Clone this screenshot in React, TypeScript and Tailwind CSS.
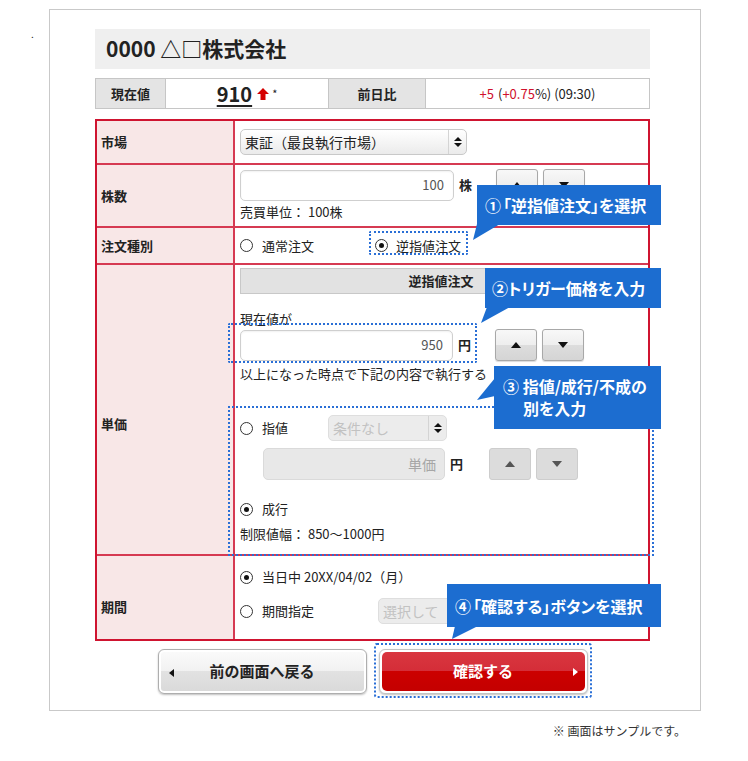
import React from 'react';

type Dir = 'up' | 'down' | 'left' | 'right';

const Tri = ({ dir, color = '#111' }: { dir: Dir; color?: string }) => {
  if (dir === 'up')
    return (
      <svg width="10" height="6" viewBox="0 0 10 6">
        <polygon points="0,6 5,0 10,6" fill={color} />
      </svg>
    );
  if (dir === 'down')
    return (
      <svg width="10" height="6" viewBox="0 0 10 6">
        <polygon points="0,0 10,0 5,6" fill={color} />
      </svg>
    );
  if (dir === 'left')
    return (
      <svg width="5" height="8" viewBox="0 0 5 8">
        <polygon points="5,0 5,8 0,4" fill={color} />
      </svg>
    );
  return (
    <svg width="5" height="8" viewBox="0 0 5 8">
      <polygon points="0,0 0,8 5,4" fill={color} />
    </svg>
  );
};

const SelectArrows = () => (
  <svg width="8" height="12" viewBox="0 0 8 12">
    <polygon points="0,5 4,1 8,5" fill="#111" />
    <polygon points="0,7 8,7 4,11" fill="#111" />
  </svg>
);

const Radio = ({ checked }: { checked?: boolean }) => (
  <span className="flex h-[13px] w-[13px] shrink-0 items-center justify-center rounded-full border-[1.5px] border-[#333] bg-white">
    {checked && <span className="h-[5px] w-[5px] rounded-full bg-[#111]" />}
  </span>
);

const Select = ({ text, width, disabled }: { text: string; width: string; disabled?: boolean }) => (
  <div
    className={
      disabled
        ? `flex h-[26px] ${width} items-stretch overflow-hidden rounded-[5px] border border-[#dedede] bg-[#ececec] text-[#c2c2c2]`
        : `flex h-[26px] ${width} items-stretch overflow-hidden rounded-[5px] border border-[#c9c9c9] bg-gradient-to-b from-white to-[#ebebeb] text-[#222]`
    }
  >
    <span className="flex flex-1 items-center whitespace-nowrap pl-[4px] text-[14px]">{text}</span>
    <span className="flex w-[18px] items-center justify-center border-l border-[#d4d4d4]">
      <SelectArrows />
    </span>
  </div>
);

const SpinButtons = ({ disabled }: { disabled?: boolean }) => (
  <div className="flex gap-[5px]">
    {(['up', 'down'] as const).map((d) => (
      <button
        key={d}
        className={
          disabled
            ? 'flex h-[32px] w-[42px] items-center justify-center rounded-[3px] border border-[#cdcdcd] bg-[#dcdcdc]'
            : 'flex h-[32px] w-[42px] items-center justify-center rounded-[3px] border border-[#a8a8a8] bg-[linear-gradient(#f8f8f8_0%,#eeeeee_50%,#dddddd_50%,#d5d5d5_100%)] shadow-[0_1px_1px_rgba(0,0,0,0.15)]'
        }
      >
        <Tri dir={d} color={disabled ? '#555' : '#111'} />
      </button>
    ))}
  </div>
);

const Label = ({ children, className }: { children: React.ReactNode; className: string }) => (
  <div className={`w-[138px] shrink-0 border-r-2 border-[#d63a52] bg-[#f8e7e7] pl-[4px] text-[13px] font-bold ${className}`}>
    {children}
  </div>
);

const callout =
  "absolute bg-[#1c6dd0] text-[16px] font-bold leading-[22px] text-white [font-feature-settings:'palt']";

export default function App() {
  return (
    <div className="relative h-[761px] w-[748px] bg-white pl-[49px] pt-[9px] font-['Noto_Sans_CJK_JP',sans-serif] text-[#222]">
      <span className="absolute left-[31px] top-[26px] text-[10px]">.</span>

      <div className="h-[702px] w-[652px] border border-[#c9c9c9] pl-[45px] pt-[19px]">
        {/* 銘柄名 */}
        <div className="flex h-[40px] w-[555px] items-center bg-[#efefef] pl-[11px] text-[21px] font-bold">
          0000 △□株式会社
        </div>

        {/* 株価 */}
        <div className="mt-[9px] flex h-[31px] w-[555px] border border-[#c6c6c6] text-[13px]">
          <div className="flex w-[69px] items-center justify-center bg-[#e4e4e4] font-bold">現在値</div>
          <div className="flex w-[163px] items-center justify-center border-l border-[#c6c6c6]">
            <span className="text-[20px] font-bold leading-none underline decoration-[1.5px] underline-offset-[3px]">910</span>
            <svg className="ml-[5px]" width="12" height="12" viewBox="0 0 12 12">
              <polygon points="6,0 12,6 8.5,6 8.5,12 3.5,12 3.5,6 0,6" fill="#d40000" />
            </svg>
            <span className="ml-[3px] text-[11px] leading-none">*</span>
          </div>
          <div className="flex w-[97px] items-center justify-center border-l border-[#c6c6c6] bg-[#e4e4e4] font-bold">前日比</div>
          <div className="flex flex-1 items-center justify-center border-l border-[#c6c6c6]">
            <span className="text-[#d0102c]">+5</span>
            <span className="ml-[4px]">(</span>
            <span className="text-[#d0102c]">+0.75</span>
            <span>%) (09:30)</span>
          </div>
        </div>

        {/* 注文フォーム */}
        <div className="mt-[10px] w-[555px] border-2 border-[#cf1430] text-[13px]">
          <div className="flex h-[42px]">
            <Label className="flex items-center">市場</Label>
            <div className="flex flex-1 items-center pl-[5px]">
              <Select text="東証（最良執行市場）" width="w-[227px]" />
            </div>
          </div>

          <div className="flex h-[63px] border-t-2 border-[#d63a52]">
            <Label className="flex items-center">株数</Label>
            <div className="flex-1 pl-[5px] pt-[4px]">
              <div className="flex items-center">
                <div className="flex h-[31px] w-[214px] items-center justify-end rounded-[5px] border border-[#cfcfcf] pr-[9px] text-[#555] shadow-[inset_0_1px_2px_rgba(0,0,0,0.06)]">
                  100
                </div>
                <span className="ml-[5px] font-bold">株</span>
                <div className="ml-[24px]">
                  <SpinButtons />
                </div>
              </div>
              <div className="mt-[2px] leading-[18px]">売買単位： 100株</div>
            </div>
          </div>

          <div className="flex h-[37px] border-t-2 border-[#d63a52]">
            <Label className="flex items-center">注文種別</Label>
            <div className="flex flex-1 items-center pl-[5px]">
              <div className="flex w-[135px] items-center gap-[9px]">
                <Radio />
                <span>通常注文</span>
              </div>
              <div className="flex items-center gap-[8px]">
                <Radio checked />
                <span>逆指値注文</span>
              </div>
            </div>
          </div>

          <div className="flex h-[291px] border-t-2 border-[#d63a52]">
            <Label className="pt-[149px]">単価</Label>
            <div className="flex-1 pl-[5px] pr-[6px] pt-[3px]">
              <div className="flex h-[26px] items-center justify-center border border-[#c8c8c8] bg-[#e2e2e2] font-bold">
                逆指値注文
              </div>
              <div className="mt-[16px] leading-[18px]">現在値が</div>
              <div className="mt-[1px] flex items-center">
                <div className="flex h-[31px] w-[213px] items-center justify-end rounded-[5px] border border-[#cfcfcf] pr-[9px] text-[#555] shadow-[inset_0_1px_2px_rgba(0,0,0,0.06)]">
                  950
                </div>
                <span className="ml-[5px] font-bold">円</span>
                <div className="ml-[24px]">
                  <SpinButtons />
                </div>
              </div>
              <div className="mt-[4px] leading-[18px]">以上になった時点で下記の内容で執行する</div>

              <div className="mt-[32px] flex h-[26px] items-center">
                <Radio />
                <span className="ml-[9px] w-[66px]">指値</span>
                <Select text="条件なし" width="w-[119px]" disabled />
              </div>
              <div className="mt-[7px] flex items-center pl-[23px]">
                <div className="flex h-[32px] w-[182px] items-center justify-end rounded-[5px] border border-[#dadada] bg-[#e8e8e8] pr-[8px] text-[14px] text-[#a6a6a6]">
                  単価
                </div>
                <span className="ml-[5px] font-bold">円</span>
                <div className="ml-[26px]">
                  <SpinButtons disabled />
                </div>
              </div>

              <div className="mt-[20px] flex items-center gap-[9px] leading-[18px]">
                <Radio checked />
                <span>成行</span>
              </div>
              <div className="mt-[7px] leading-[18px]">制限値幅： 850～1000円</div>
            </div>
          </div>

          <div className="flex h-[85px] border-t-2 border-[#d63a52]">
            <Label className="pt-[41px]">期間</Label>
            <div className="flex-1 pl-[5px] pt-[12px]">
              <div className="flex items-center gap-[9px] leading-[18px]">
                <Radio checked />
                <span>当日中 20XX/04/02（月）</span>
              </div>
              <div className="mt-[12px] flex h-[26px] items-center">
                <Radio />
                <span className="ml-[9px] w-[116px]">期間指定</span>
                <Select text="選択して" width="w-[130px]" disabled />
              </div>
            </div>
          </div>
        </div>

        {/* ボタン */}
        <div className="mt-[8px] flex w-[555px] justify-center gap-[12px]">
          <button className="relative flex h-[45px] w-[209px] items-center justify-center rounded-[6px] border border-[#aeaeae] bg-[linear-gradient(#fbfbfb_0%,#f1f1f1_50%,#e2e2e2_50%,#d9d9d9_100%)] text-[15px] font-bold text-[#222] shadow-[inset_0_0_0_2px_#ffffff,0_1px_2px_rgba(0,0,0,0.25)]">
            <span className="absolute left-[10px] top-[19px] flex">
              <Tri dir="left" />
            </span>
            前の画面へ戻る
          </button>
          <button className="flex h-[45px] w-[209px] items-center justify-center rounded-[6px] border border-[#c4c4c4] bg-white p-[2px] shadow-[0_1px_2px_rgba(0,0,0,0.25)]">
            <span className="relative flex h-full w-full items-center justify-center rounded-[5px] bg-[linear-gradient(#d9363f_0%,#d42d38_50%,#cc0000_50%,#c40000_100%)] text-[15px] font-bold text-white">
              確認する
              <span className="absolute right-[7px] top-[16px] flex">
                <Tri dir="right" color="#ffffff" />
              </span>
            </span>
          </button>
        </div>
      </div>

      <div className="mt-[11px] w-[652px] pr-[15px] text-right text-[12px] leading-[18px] text-[#333]">
        ※ 画面はサンプルです。
      </div>

      {/* 操作ガイド */}
      <div className="absolute left-[369px] top-[231px] h-[24px] w-[99px] rounded-[2px] border-2 border-dotted border-[#2a6fd6]" />
      <div className="absolute left-[228px] top-[323px] h-[40px] w-[249px] rounded-[2px] border-2 border-dotted border-[#2a6fd6]" />
      <div className="absolute left-[228px] top-[406px] h-[150px] w-[426px] border-2 border-dotted border-[#2a6fd6]" />
      <div className="absolute left-[374px] top-[643px] h-[55px] w-[218px] rounded-[3px] border-2 border-dotted border-[#2a6fd6]" />

      <div className={`${callout} left-[477px] top-[185px] flex h-[40px] w-[184px] items-center pl-[8px]`}>
        <span className="mr-[2px]">①</span>「逆指値注文」を選択
      </div>
      <svg className="absolute left-[472px] top-[224px]" width="30" height="17" viewBox="0 0 30 17">
        <polygon points="5,0 28,0 1,16" fill="#1c6dd0" />
      </svg>

      <div className={`${callout} left-[485px] top-[268px] flex h-[40px] w-[176px] items-center pl-[7px]`}>
        ②トリガー価格を入力
      </div>
      <svg className="absolute left-[480px] top-[307px]" width="32" height="17" viewBox="0 0 32 17">
        <polygon points="7,0 30,0 1,16" fill="#1c6dd0" />
      </svg>

      <div className={`${callout} left-[494px] top-[366px] h-[63px] w-[167px] pl-[9px] pt-[9px]`}>
        <div>③ 指値/成行/不成の</div>
        <div className="pl-[20px]">別を入力</div>
      </div>
      <svg className="absolute left-[476px] top-[376px]" width="20" height="26" viewBox="0 0 20 26">
        <polygon points="19,2 19,20 1,24" fill="#1c6dd0" />
      </svg>

      <div className={`${callout} left-[447px] top-[584px] flex h-[43px] w-[214px] items-center pl-[8px]`}>
        <span className="mr-[2px]">④</span>「確認する」ボタンを選択
      </div>
      <svg className="absolute left-[451px] top-[626px]" width="28" height="14" viewBox="0 0 28 14">
        <polygon points="4,0 27,0 1,13" fill="#1c6dd0" />
      </svg>
    </div>
  );
}
